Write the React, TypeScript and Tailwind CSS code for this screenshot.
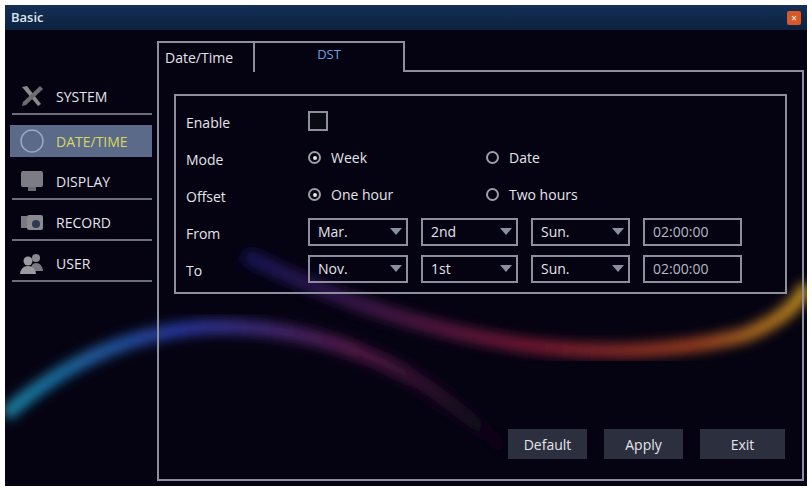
import React from 'react';

const font = { fontFamily: '"Open Sans", "Liberation Sans", sans-serif' };

const Arrow = () => (
  <svg width="12" height="8" viewBox="0 0 12 8" className="shrink-0">
    <path d="M0 0 L12 0 L6 7 Z" fill="#8a8fa0" />
  </svg>
);

const Select = ({ value, w }: { value: string; w: string }) => (
  <div className={`${w} h-[28px] border-2 border-[#8d8f9c] flex items-center justify-between pl-2 pr-1 text-[14px] text-[#e4e4ea]`}>
    <span>{value}</span>
    <Arrow />
  </div>
);

const TimeBox = ({ value }: { value: string }) => (
  <div className="w-[99px] h-[28px] border-2 border-[#8d8f9c] flex items-center pl-2 text-[14px] text-[#b8bac4]">{value}</div>
);

const Radio = ({ on, label }: { on: boolean; label: string }) => (
  <div className="flex items-center gap-[10px] text-[14px] text-[#e4e4ea]">
    <span className="w-[13px] h-[13px] rounded-full border-2 border-[#9c9ea8] flex items-center justify-center">
      {on && <span className="w-[4px] h-[4px] rounded-full bg-[#e4e4ea]" />}
    </span>
    {label}
  </div>
);

const icons: Record<string, React.ReactNode> = {
  SYSTEM: (
    <svg width="26" height="24" viewBox="0 0 26 24">
      <path d="M3 3 L8 2 L22 20 L19 22 Z" fill="#8a8a8a" />
      <path d="M21 2 L24 5 L7 21 L3 22 L4 18 Z" fill="#6d6d6d" />
    </svg>
  ),
  'DATE/TIME': (
    <svg width="28" height="28" viewBox="0 0 28 28">
      <circle cx="14" cy="14" r="11" fill="none" stroke="#9aa8bf" strokeWidth="1.5" />
    </svg>
  ),
  DISPLAY: (
    <svg width="26" height="24" viewBox="0 0 26 24">
      <rect x="2" y="2" width="22" height="16" rx="2" fill="#7c7c84" />
      <rect x="9" y="18" width="8" height="4" fill="#6a6a70" />
    </svg>
  ),
  RECORD: (
    <svg width="26" height="24" viewBox="0 0 26 24">
      <rect x="2" y="6" width="6" height="12" fill="#7a7a80" />
      <rect x="8" y="5" width="16" height="15" rx="2" fill="#8a8a92" />
      <circle cx="17" cy="14" r="4" fill="#2b3a55" />
    </svg>
  ),
  USER: (
    <svg width="26" height="24" viewBox="0 0 26 24">
      <circle cx="17" cy="7" r="4" fill="#8a8a90" />
      <path d="M11 20 Q12 12 17 12 Q23 12 24 20 Z" fill="#7a7a80" />
      <circle cx="9" cy="10" r="4.5" fill="#9a9aa0" />
      <path d="M1 23 Q2 15 9 15 Q16 15 17 23 Z" fill="#9a9aa0" />
    </svg>
  ),
};

const SideItem = ({ label, active }: { label: string; active?: boolean }) => (
  <div className={active ? 'mt-[4px] mb-[2px]' : ''}>
    <div
      className={`h-[32px] flex items-center gap-[10px] pl-[8px] text-[14px] ${
        active ? 'bg-[#5a6a88] text-[#d8d860]' : 'text-[#e4e4ea]'
      }`}
    >
      <span className="w-[28px] flex justify-center">{icons[label]}</span>
      {label}
    </div>
    {!active && <div className="h-[2px] bg-[#6c6e7a] mt-[1px] ml-[2px]" />}
  </div>
);

const Row = ({ label, children }: { label: string; children: React.ReactNode }) => (
  <div className="flex items-center h-[37px]">
    <div className="w-[122px] text-[14px] text-[#e4e4ea] pt-[4px]">{label}</div>
    {children}
  </div>
);

export default function App() {
  return (
    <div className="w-[812px] h-[492px] bg-white p-[5px] pb-[6px]" style={font}>
      <div className="relative w-full h-full bg-[#050312] overflow-hidden flex flex-col">
        <svg className="absolute inset-0" width="802" height="481" viewBox="0 0 802 481">
          <defs>
            <linearGradient id="g1" x1="0" x2="1">
              <stop offset="0" stopColor="#1a8aa8" />
              <stop offset="0.35" stopColor="#2838a0" />
              <stop offset="0.7" stopColor="#5a1a4a" />
              <stop offset="1" stopColor="#050312" />
            </linearGradient>
            <linearGradient id="g2" x1="0" x2="1">
              <stop offset="0" stopColor="#1a1a6a" />
              <stop offset="0.5" stopColor="#8a1a3a" />
              <stop offset="0.8" stopColor="#b84a20" />
              <stop offset="1" stopColor="#e0a820" />
            </linearGradient>
            <filter id="b"><feGaussianBlur stdDeviation="6" /></filter>
          </defs>
          <path d="M0 410 Q90 330 200 322 Q320 318 420 380 Q470 415 500 445" stroke="url(#g1)" strokeWidth="14" fill="none" filter="url(#b)" />
          <path d="M240 250 Q380 320 520 340 Q640 355 740 330 Q790 310 802 280" stroke="url(#g2)" strokeWidth="14" fill="none" filter="url(#b)" opacity="0.85" />
        </svg>

        <div className="relative h-[25px] bg-gradient-to-b from-[#143055] to-[#0c2240] flex items-center justify-between px-[6px]">
          <span className="text-[13px] text-[#dfe6f0] font-semibold">Basic</span>
          <span className="w-[14px] h-[14px] bg-[#d8582a] rounded-[2px] flex items-center justify-center text-white text-[10px] leading-none">×</span>
        </div>

        <div className="relative flex flex-1">
          <div className="w-[142px] ml-[5px] pt-[50px] flex flex-col gap-[6px]">
            <SideItem label="SYSTEM" />
            <SideItem label="DATE/TIME" active />
            <SideItem label="DISPLAY" />
            <SideItem label="RECORD" />
            <SideItem label="USER" />
          </div>

          <div className="flex-1 ml-[5px] mr-[3px] pt-[11px] pb-[5px] flex flex-col">
            <div className="flex items-end h-[31px]">
              <div className="w-[98px] h-[31px] border-2 border-b-0 border-[#8d8f9c] flex items-center pl-[6px] text-[14px] text-[#e4e4ea]">Date/Time</div>
              <div className="w-[150px] h-[31px] border-t-2 border-r-2 border-[#8d8f9c] flex items-start justify-center pt-[2px] text-[13px] text-[#6ba0e0]">DST</div>
              <div className="flex-1 border-b-2 border-[#8d8f9c]" />
            </div>
            <div className="flex-1 border-2 border-t-0 border-[#8d8f9c] px-[15px] pt-[22px] pb-[20px] flex flex-col justify-between">
              <div className="border-2 border-[#8d8f9c] h-[200px] pl-[10px] pt-[6px]">
                <Row label="Enable">
                  <span className="w-[20px] h-[20px] border-2 border-[#8d8f9c] bg-[#0a0a12]" />
                </Row>
                <Row label="Mode">
                  <div className="w-[178px]"><Radio on label="Week" /></div>
                  <Radio on={false} label="Date" />
                </Row>
                <Row label="Offset">
                  <div className="w-[178px]"><Radio on label="One hour" /></div>
                  <Radio on={false} label="Two hours" />
                </Row>
                <Row label="From">
                  <div className="flex gap-[13px]">
                    <Select value="Mar." w="w-[100px]" />
                    <Select value="2nd" w="w-[97px]" />
                    <Select value="Sun." w="w-[99px]" />
                    <TimeBox value="02:00:00" />
                  </div>
                </Row>
                <Row label="To">
                  <div className="flex gap-[13px]">
                    <Select value="Nov." w="w-[100px]" />
                    <Select value="1st" w="w-[97px]" />
                    <Select value="Sun." w="w-[99px]" />
                    <TimeBox value="02:00:00" />
                  </div>
                </Row>
              </div>
              <div className="flex justify-end gap-[17px] pr-[2px]">
                <button className="w-[79px] h-[30px] bg-[#2c2f3e] text-[14px] text-[#e4e4ea]">Default</button>
                <button className="w-[79px] h-[30px] bg-[#2c2f3e] text-[14px] text-[#e4e4ea]">Apply</button>
                <button className="w-[85px] h-[30px] bg-[#2c2f3e] text-[14px] text-[#e4e4ea]">Exit</button>
              </div>
            </div>
          </div>
        </div>
      </div>
    </div>
  );
}
